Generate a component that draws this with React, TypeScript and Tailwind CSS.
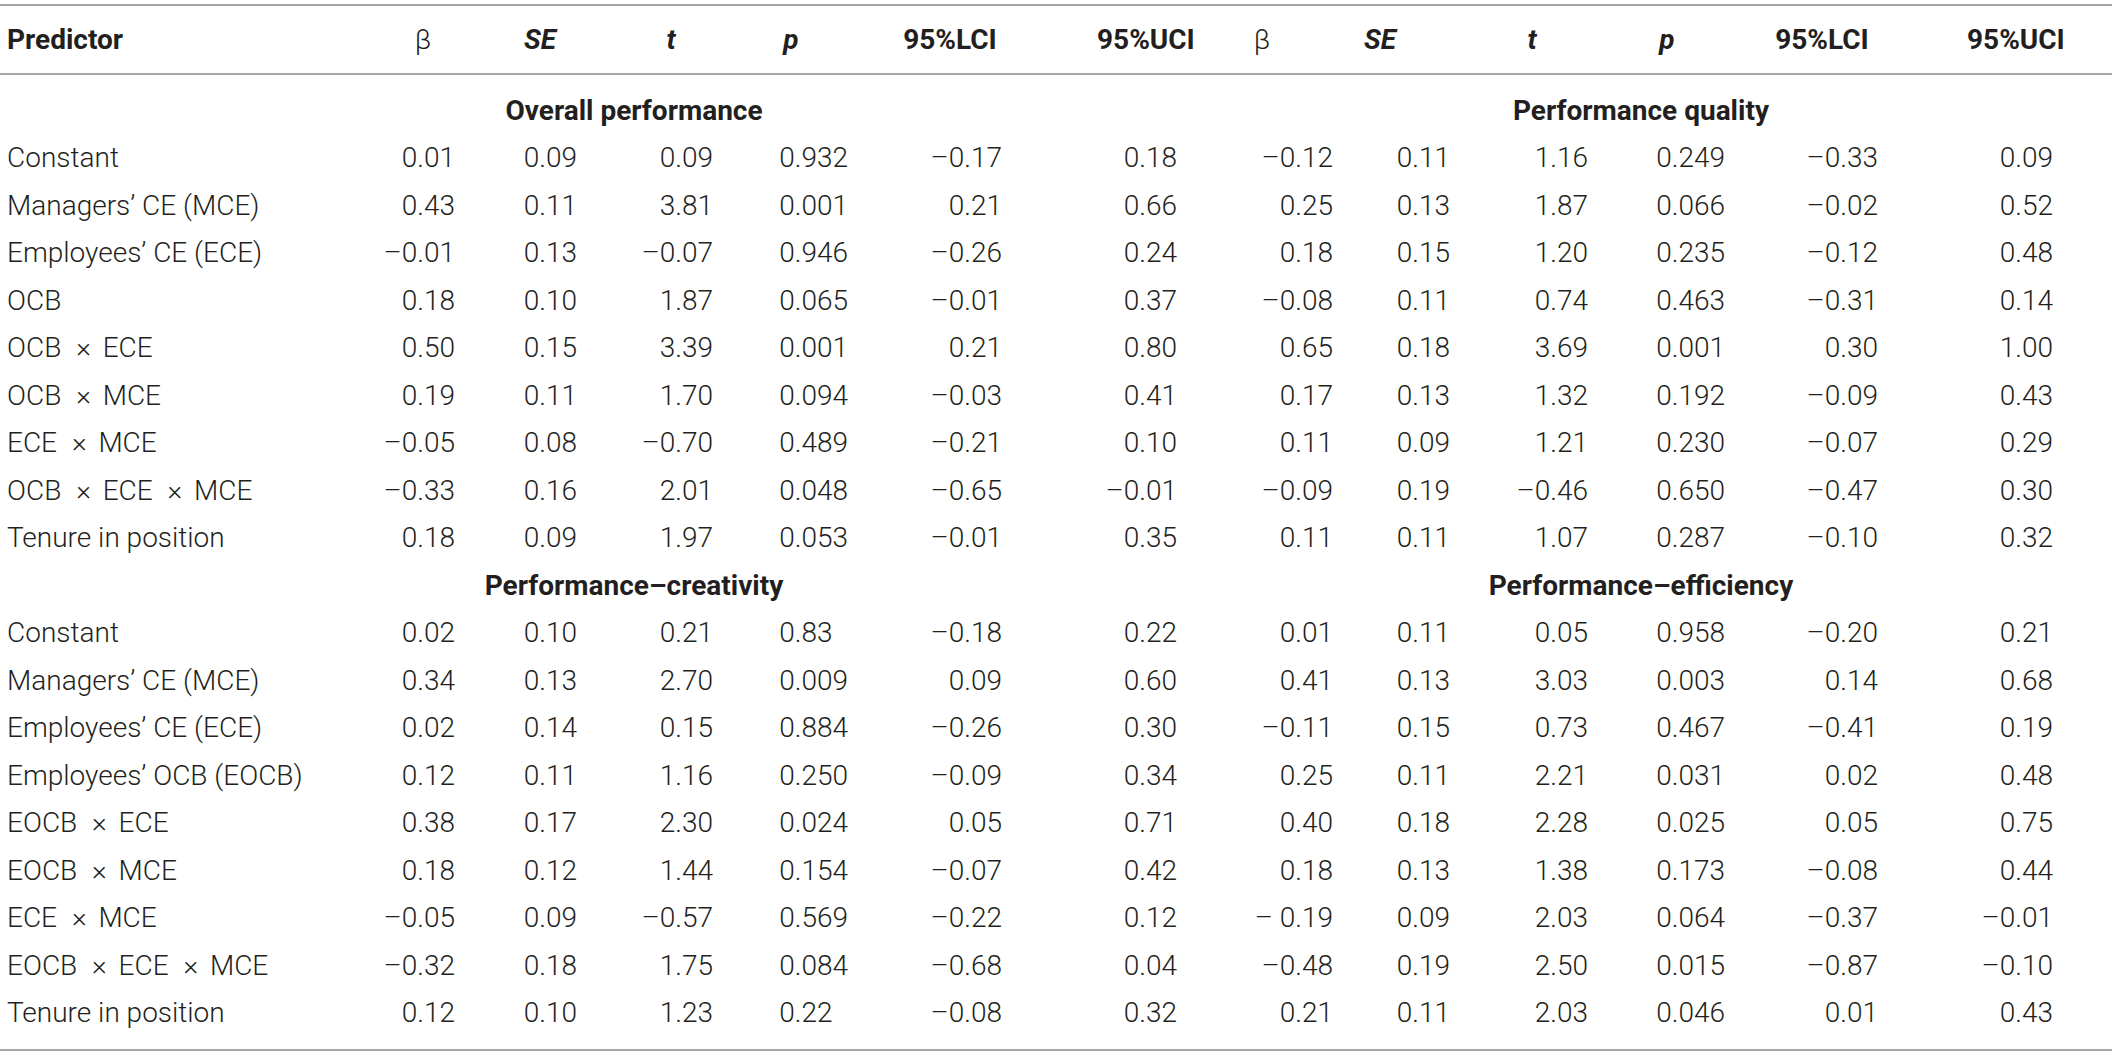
import React from "react";

type Row = { label: string; v: string[] };

const GRID =
  "grid grid-cols-[360px_95px_122px_136px_135px_154px_175px_156px_117px_138px_137px_153px_175px_59px]";

const sections: { left: string; right: string; rows: Row[] }[] = [
  {
    left: "Overall performance",
    right: "Performance quality",
    rows: [
      { label: "Constant", v: ["0.01", "0.09", "0.09", "0.932", "–0.17", "0.18", "–0.12", "0.11", "1.16", "0.249", "–0.33", "0.09"] },
      { label: "Managers’ CE (MCE)", v: ["0.43", "0.11", "3.81", "0.001", "0.21", "0.66", "0.25", "0.13", "1.87", "0.066", "–0.02", "0.52"] },
      { label: "Employees’ CE (ECE)", v: ["–0.01", "0.13", "–0.07", "0.946", "–0.26", "0.24", "0.18", "0.15", "1.20", "0.235", "–0.12", "0.48"] },
      { label: "OCB", v: ["0.18", "0.10", "1.87", "0.065", "–0.01", "0.37", "–0.08", "0.11", "0.74", "0.463", "–0.31", "0.14"] },
      { label: "OCB × ECE", v: ["0.50", "0.15", "3.39", "0.001", "0.21", "0.80", "0.65", "0.18", "3.69", "0.001", "0.30", "1.00"] },
      { label: "OCB × MCE", v: ["0.19", "0.11", "1.70", "0.094", "–0.03", "0.41", "0.17", "0.13", "1.32", "0.192", "–0.09", "0.43"] },
      { label: "ECE × MCE", v: ["–0.05", "0.08", "–0.70", "0.489", "–0.21", "0.10", "0.11", "0.09", "1.21", "0.230", "–0.07", "0.29"] },
      { label: "OCB × ECE × MCE", v: ["–0.33", "0.16", "2.01", "0.048", "–0.65", "–0.01", "–0.09", "0.19", "–0.46", "0.650", "–0.47", "0.30"] },
      { label: "Tenure in position", v: ["0.18", "0.09", "1.97", "0.053", "–0.01", "0.35", "0.11", "0.11", "1.07", "0.287", "–0.10", "0.32"] },
    ],
  },
  {
    left: "Performance–creativity",
    right: "Performance–efficiency",
    rows: [
      { label: "Constant", v: ["0.02", "0.10", "0.21", "0.83", "–0.18", "0.22", "0.01", "0.11", "0.05", "0.958", "–0.20", "0.21"] },
      { label: "Managers’ CE (MCE)", v: ["0.34", "0.13", "2.70", "0.009", "0.09", "0.60", "0.41", "0.13", "3.03", "0.003", "0.14", "0.68"] },
      { label: "Employees’ CE (ECE)", v: ["0.02", "0.14", "0.15", "0.884", "–0.26", "0.30", "–0.11", "0.15", "0.73", "0.467", "–0.41", "0.19"] },
      { label: "Employees’ OCB (EOCB)", v: ["0.12", "0.11", "1.16", "0.250", "–0.09", "0.34", "0.25", "0.11", "2.21", "0.031", "0.02", "0.48"] },
      { label: "EOCB × ECE", v: ["0.38", "0.17", "2.30", "0.024", "0.05", "0.71", "0.40", "0.18", "2.28", "0.025", "0.05", "0.75"] },
      { label: "EOCB × MCE", v: ["0.18", "0.12", "1.44", "0.154", "–0.07", "0.42", "0.18", "0.13", "1.38", "0.173", "–0.08", "0.44"] },
      { label: "ECE × MCE", v: ["–0.05", "0.09", "–0.57", "0.569", "–0.22", "0.12", "– 0.19", "0.09", "2.03", "0.064", "–0.37", "–0.01"] },
      { label: "EOCB × ECE × MCE", v: ["–0.32", "0.18", "1.75", "0.084", "–0.68", "0.04", "–0.48", "0.19", "2.50", "0.015", "–0.87", "–0.10"] },
      { label: "Tenure in position", v: ["0.12", "0.10", "1.23", "0.22", "–0.08", "0.32", "0.21", "0.11", "2.03", "0.046", "0.01", "0.43"] },
    ],
  },
];

function Label({ text }: { text: string }) {
  const parts = text.split(" × ");
  return (
    <div className="pl-[7px] whitespace-nowrap">
      {parts.map((p, i) => (
        <React.Fragment key={i}>
          {i > 0 ? (
            <>
              {" "}
              <span className="ml-[8px] mr-[5px]">×</span>{" "}
            </>
          ) : null}
          {p}
        </React.Fragment>
      ))}
    </div>
  );
}

function Val({ s, pCol }: { s: string; pCol: boolean }) {
  // decimal alignment for p column values with two decimals
  const pad = pCol && s.split(".")[1]?.length === 2;
  return (
    <div className="text-right whitespace-pre">
      {s}
      {pad ? <span className="invisible">0</span> : null}
    </div>
  );
}

function HeaderRow() {
  const hb = "font-bold";
  const hbi = "font-bold italic";
  return (
    <div className={`${GRID} h-[69px] items-center border-b-2 border-[#a6a6a6]`}>
      <div className={`${hb} pl-[7px]`}>Predictor</div>
      <div className="text-center pl-[31px]">β</div>
      <div className={`${hbi} text-center pl-[48px]`}>SE</div>
      <div className={`${hbi} text-center pl-[52px]`}>t</div>
      <div className={`${hbi} text-center pl-[21px]`}>p</div>
      <div className={`${hb} text-center pl-[50px]`}>95%LCI</div>
      <div className={`${hb} text-center pl-[95px]`}>95%UCI</div>
      <div className="text-center pl-[14px]">β</div>
      <div className={`${hbi} text-center pr-[23px]`}>SE</div>
      <div className={`${hbi} text-center pl-[26px]`}>t</div>
      <div className={`${hbi} text-center pl-[21px]`}>p</div>
      <div className={`${hb} text-center pl-[41px]`}>95%LCI</div>
      <div className={`${hb} text-center pl-[89px]`}>95%UCI</div>
      <div />
    </div>
  );
}

export default function App() {
  return (
    <div className="w-[2118px] h-[1053px] bg-white overflow-hidden text-[#231f20] text-[28px] font-light font-['Roboto',sans-serif]">
      <div className="w-[2112px] mt-[4px] border-t-2 border-b-2 border-[#a6a6a6]">
        <HeaderRow />
        <div className="py-3">
          {sections.map((sec) => (
            <React.Fragment key={sec.left}>
              <div className={`${GRID} h-[47.5px] items-center font-bold`}>
                <div />
                <div className="col-span-6 text-center pr-[269px]">{sec.left}</div>
                <div className="col-span-7 text-center pr-[7px]">{sec.right}</div>
              </div>
              {sec.rows.map((r) => (
                <div key={sec.left + r.label} className={`${GRID} h-[47.5px] items-center`}>
                  <Label text={r.label} />
                  {r.v.map((s, i) => (
                    <Val key={i} s={s} pCol={i === 3 || i === 9} />
                  ))}
                  <div />
                </div>
              ))}
            </React.Fragment>
          ))}
        </div>
      </div>
    </div>
  );
}
